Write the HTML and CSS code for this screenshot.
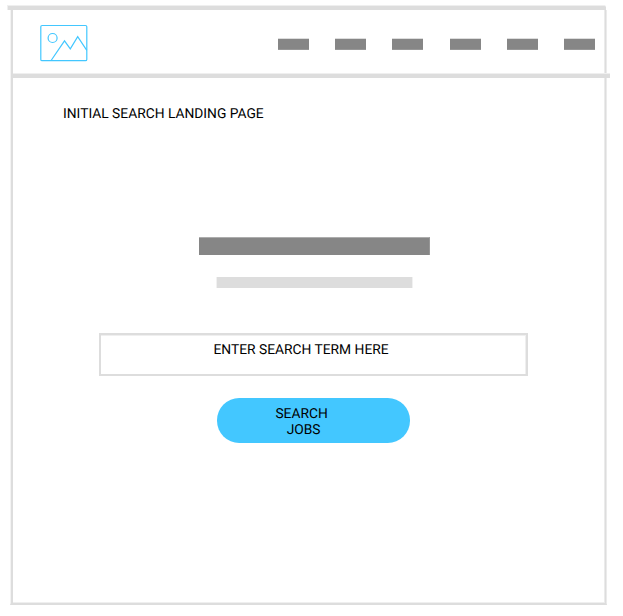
FILE: index.html
```html
<!DOCTYPE html>
<html lang="en">
<head>
<meta charset="utf-8">
<title>Initial Search Landing Page</title>
<link rel="stylesheet" href="styles.css">
</head>
<body>
<div class="rule rule-top"></div>
<div class="page">
  <header class="header">
    <svg class="logo" width="49" height="38" viewBox="0 0 49 38" fill="none" stroke="#43c7ff" stroke-width="1.2">
      <rect x="1.8" y="1.5" width="46" height="35.2" rx="1.3"/>
      <circle cx="13.6" cy="14" r="4.5"/>
      <path d="M12.1 36.5 25.5 16.8l5.8 8.1 7.4-12.2 9.1 13.7"/>
    </svg>
    <nav class="nav"><i></i><i></i><i></i><i></i><i></i><i></i></nav>
  </header>
  <div class="rule rule-header"></div>
  <main class="main">
    <h1 class="title">INITIAL SEARCH LANDING PAGE</h1>
    <div class="headline"></div>
    <div class="subline"></div>
    <div class="field">ENTER SEARCH TERM HERE</div>
    <div class="button">SEARCH<br><span class="second-line">JOBS</span></div>
  </main>
</div>
</body>
</html>
```
FILE: styles.css
```css
* { box-sizing: border-box; }
body {
  margin: 0;
  padding-top: 5px;
  height: 616px;
  overflow: hidden;
  background: #fff;
  color: #000;
  font: 13.8px/16px Roboto, sans-serif;
  text-rendering: geometricPrecision;
}
.rule {
  height: 5px;
  background: #ddd;
  border-top: 1px solid #efefef;
}
.rule-top {
  width: 599px;
  margin-left: 7px;
  border-left: 1px solid #efefef;
  border-top-right-radius: 2px;
}
.page {
  width: 597px;
  height: 595px;
  margin-left: 10px;
  padding-left: 2px;
  border: solid #ddd;
  border-width: 0 1px 2px;
  border-left-color: #f3f3f3;
  border-right-color: #ebebeb;
  box-shadow: inset 2px 0 #ddd, inset -1px 0 #ddd, inset -2px 0 #ebebeb, inset 0 -1px #efefef;
}
.header {
  display: flex;
  justify-content: space-between;
  height: 63px;
  padding: 14px 11px 0 26px;
}
.logo { display: block; }
.nav {
  display: flex;
  gap: 26.2px;
  padding-top: 14px;
}
.nav i {
  width: 31px;
  height: 12px;
  background: #868686;
  border-top: 1px solid #ddd;
  border-bottom: 1px solid #979797;
}
.rule-header { width: 597px; }
.main {
  display: flex;
  flex-direction: column;
  align-items: flex-start;
}
.title {
  margin: 28px 0 0 50px;
  font-size: 13.8px;
  font-weight: 400;
  line-height: 16px;
  white-space: nowrap;
}
.headline {
  width: 231px;
  height: 18px;
  margin: 115px 0 0 186px;
  background: #868686;
  border-top: 1px solid #adadad;
  border-right: 1px solid #979797;
}
.subline {
  width: 197px;
  height: 11px;
  margin: 22px 0 0 203px;
  background: #ddd;
  border: solid #f1f1f1;
  border-width: 0 1px;
}
.field {
  width: 429px;
  height: 43px;
  margin: 45px 0 0 86px;
  padding: 7px 0 0 112.5px;
  border: 2px solid #ddd;
  box-shadow: inset 0 1px #efefef, inset -1px 0 #efefef;
  white-space: nowrap;
}
.button {
  width: 193.4px;
  height: 44.4px;
  margin: 22.2px 0 0 203.6px;
  padding: 7.4px 23.4px 0 0;
  border-radius: 22.2px;
  background: #43c7ff;
  text-align: center;
}
.second-line { padding-left: 4px; }
```
